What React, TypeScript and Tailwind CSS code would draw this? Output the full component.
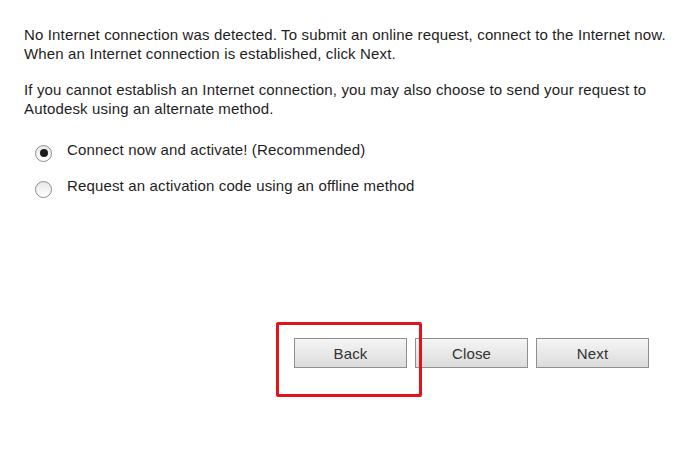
import React from "react";

const RadioOption = ({ checked, label }: { checked?: boolean; label: string }) => (
  <div className="flex items-center h-[20px]">
    <span className="w-[17px] h-[17px] rounded-full border border-[#8c8c8c] bg-gradient-to-b from-[#e8e8e8] to-white flex items-center justify-center shrink-0 mt-[8px]">
      {checked && <span className="w-[8px] h-[8px] rounded-full bg-[#1c1c1c]" />}
    </span>
    <span className="ml-[15px]">{label}</span>
  </div>
);

const DlgButton = ({ label }: { label: string }) => (
  <button className="w-[113px] h-[30px] border border-[#8f8f8f] bg-gradient-to-b from-[#f5f5f5] to-[#dcdcdc] text-[#333] text-[15px]">
    {label}
  </button>
);

export default function App() {
  return (
    <div
      className="relative w-[700px] h-[450px] bg-white text-[#1e1e1e] text-[15px] tracking-[0.15px] leading-[19px]"
      style={{ fontFamily: '"Liberation Sans", Arial, sans-serif' }}
    >
      <div className="pt-[25px] pl-[24px] pr-[10px]">
        <p>
          No Internet connection was detected. To submit an online request, connect to the Internet now.
          <br />
          When an Internet connection is established, click Next.
        </p>
        <p className="mt-[17px]">
          If you cannot establish an Internet connection, you may also choose to send your request to
          <br />
          Autodesk using an alternate method.
        </p>
        <div className="mt-[21px] pl-[11px] flex flex-col gap-[16px]">
          <RadioOption checked label="Connect now and activate! (Recommended)" />
          <RadioOption label="Request an activation code using an offline method" />
        </div>
      </div>

      <div className="absolute left-[294px] top-[338px] flex gap-[8px]">
        <DlgButton label="Back" />
        <DlgButton label="Close" />
        <DlgButton label="Next" />
      </div>

      <div className="absolute left-[276px] top-[322px] w-[146px] h-[75px] border-[3px] border-[#e3131b] rounded-[2px]" />
    </div>
  );
}
